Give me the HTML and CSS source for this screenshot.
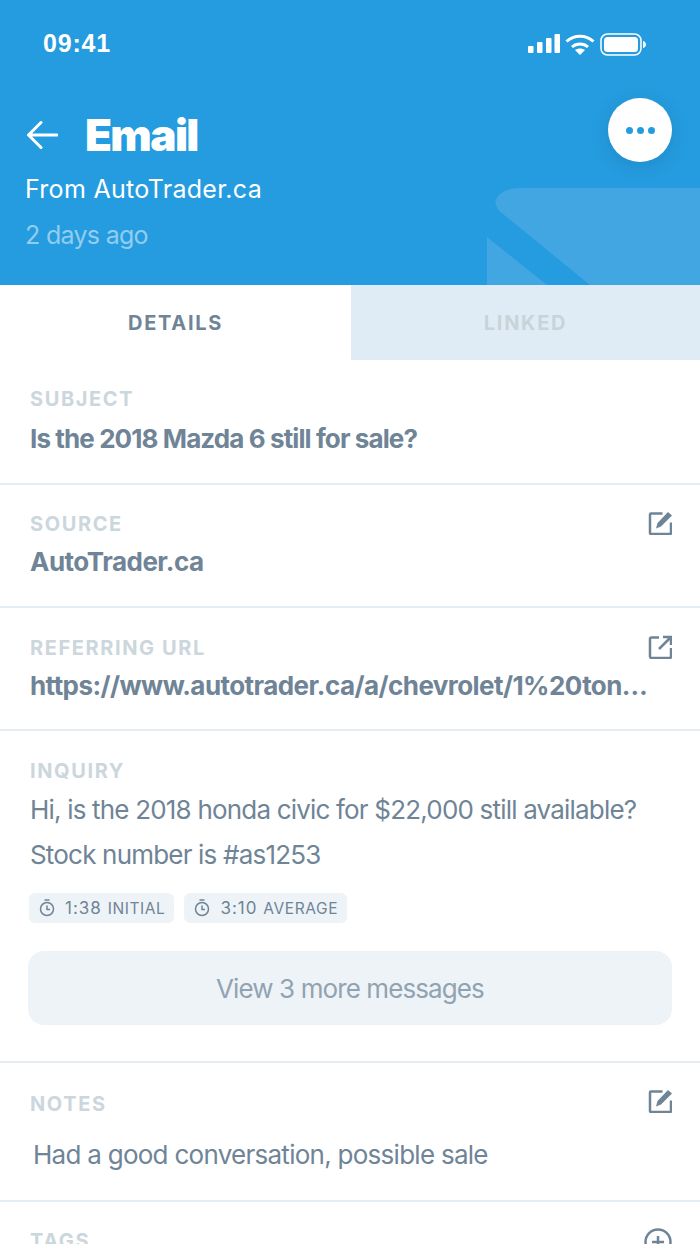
FILE: index.html
```html
<!DOCTYPE html>
<html lang="en">
<head>
<meta charset="utf-8">
<title>Email</title>
<link rel="stylesheet" href="styles.css">
</head>
<body>
<div class="screen">
  <header class="hero">
    <svg class="hero-art" width="700" height="285" viewBox="0 0 700 285" aria-hidden="true">
      <path class="art" d="M700 188H520C504 188 491 198 497 207C498 210 500 212 503 214L590 285H700Z"/>
      <path class="art" d="M487 237L547 285H487Z"/>
    </svg>
    <div class="status">
      <span class="clock">09:41</span>
      <div class="status-icons">
        <svg width="33" height="20" viewBox="0 0 33 20"><g fill="#fff"><rect x="1" y="12" width="5.500" height="7" rx="1"/><rect x="10" y="8" width="5.500" height="11" rx="1"/><rect x="19" y="4" width="5.500" height="15" rx="1"/><rect x="27.500" y="0" width="5.500" height="19" rx="1"/></g></svg>
        <svg width="30" height="22" viewBox="0 0 30 22"><g fill="none" stroke="#fff" stroke-width="3"><path d="M1.500 8.500C9 1.500 21 1.500 28.500 8.500"/><path d="M7 14C11.500 10 18.500 10 23 14"/></g><path fill="#fff" d="M15 22L10 17C13 15 17 15 20 17Z"/></svg>
        <svg width="46" height="23" viewBox="0 0 46 23"><rect x="1" y="1" width="40" height="21" rx="6.500" fill="none" stroke="#fff" stroke-width="1.500"/><rect x="4" y="4" width="34" height="15" rx="3.500" fill="#fff"/><path fill="#fff" d="M43 8C45 8.500 46 10 46 11.500C46 13 45 14.500 43 15Z"/></svg>
      </div>
    </div>
    <div class="title-row">
      <svg class="back" width="32" height="32" viewBox="0 0 32 32"><path d="M31 16H3.500M15 3.500L2.500 16L15 28.500" fill="none" stroke="#fff" stroke-width="3" stroke-linecap="round" stroke-linejoin="round"/></svg>
      <h1>Email</h1>
    </div>
    <p class="from">From AutoTrader.ca</p>
    <p class="ago">2 days ago</p>
    <button class="more" aria-label="More"><i></i><i></i><i></i></button>
  </header>

  <nav class="tabs">
    <div class="tab active">DETAILS</div>
    <div class="tab">LINKED</div>
  </nav>

  <section class="row subject">
    <div class="label">SUBJECT</div>
    <div class="value tight">Is the 2018 Mazda 6 still for sale?</div>
  </section>

  <section class="row source">
    <div class="label-line"><div class="label">SOURCE</div>
      <svg class="ico" width="24" height="24" viewBox="0 0 24 24"><path class="ln" d="M14.500 2.500H3A1 1 0 0 0 2 3.500V22A1 1 0 0 0 3 23H22A1 1 0 0 0 23 22V11.500"/><path class="fl" d="M20 1L24 4.500L13 15.500L8 17.500L9.500 12Z"/></svg>
    </div>
    <div class="value">AutoTrader.ca</div>
  </section>

  <section class="row url">
    <div class="label-line"><div class="label">REFERRING URL</div>
      <svg class="ico" width="24" height="24" viewBox="0 0 24 24"><path class="ln" d="M11 2.500H3.500A1.500 1.500 0 0 0 2 4V21.500A1.500 1.500 0 0 0 3.500 23H21.500A1.500 1.500 0 0 0 23 21.500V13"/><path class="ln" d="M11 14L22 3M15 2H23V10"/></svg>
    </div>
    <div class="value link">https://www.autotrader.ca/a/chevrolet/1%20ton…</div>
  </section>

  <section class="row inquiry">
    <div class="label">INQUIRY</div>
    <p class="body-text">Hi, is the 2018 honda civic for $22,000 still available?<br>Stock number is #as1253</p>
    <div class="chips">
      <span class="chip">
        <svg width="16" height="18" viewBox="0 0 16 18"><g fill="none" stroke="#6f8496" stroke-width="1.500"><circle cx="8" cy="10" r="6.500"/><path d="M8 6.500V10.500H11"/><path d="M5.500 1H10.500"/></g></svg>
        <span>1:38 <small>INITIAL</small></span>
      </span>
      <span class="chip">
        <svg width="16" height="18" viewBox="0 0 16 18"><g fill="none" stroke="#6f8496" stroke-width="1.500"><circle cx="8" cy="10" r="6.500"/><path d="M8 6.500V10.500H11"/><path d="M5.500 1H10.500"/></g></svg>
        <span>3:10 <small>AVERAGE</small></span>
      </span>
    </div>
    <button class="view-more">View 3 more messages</button>
  </section>

  <section class="row notes">
    <div class="label-line"><div class="label">NOTES</div>
      <svg class="ico raised" width="24" height="24" viewBox="0 0 24 24"><path class="ln" d="M14.500 2.500H3A1 1 0 0 0 2 3.500V22A1 1 0 0 0 3 23H22A1 1 0 0 0 23 22V11.500"/><path class="fl" d="M20 1L24 4.500L13 15.500L8 17.500L9.500 12Z"/></svg>
    </div>
    <p class="note-text">Had a good conversation, possible sale</p>
  </section>

  <section class="row tags">
    <div class="label-line"><div class="label">TAGS</div>
      <svg class="ico" width="28" height="28" viewBox="0 0 28 28"><circle class="ln" cx="14" cy="14" r="12.500"/><path class="ln" d="M14 8V20M8 14H20"/></svg>
    </div>
  </section>
</div>
</body>
</html>
```
FILE: styles.css
```css
* { box-sizing: border-box; }
html, body { margin: 0; padding: 0; background: #fff; }
.screen {
  width: 700px; height: 1244px; overflow: hidden;
  font-family: Inter, "Liberation Sans", sans-serif; color: #6f8496;
}
.hero {
  position: relative; height: 285px; background: #259cdf; color: #fff;
  padding: 0 26px; overflow: hidden;
}
.hero-art { position: absolute; left: 0; top: 0; }
.art { fill: #42a6e3; }
.status {
  position: relative; height: 106px; padding: 30px 28px 0 17px;
  display: flex; justify-content: space-between; align-items: flex-start;
}
.clock { font: bold 25px/26px "Liberation Sans", sans-serif; letter-spacing: 0.8px; }
.status-icons { display: flex; align-items: center; gap: 5px; height: 28px; }
.title-row { position: relative; display: flex; align-items: center; gap: 27px; height: 58px; }
.back { flex: none; width: 32px; height: 32px; }
h1 { margin: 0; font: 900 44px/58px Inter, sans-serif; letter-spacing: -1.600px; }
.from { position: relative; margin: 9px 0 0 -1px; font-size: 25px; line-height: 32px; letter-spacing: 0.3px; }
.ago { position: relative; margin: 14px 0 0 -1px; font-size: 25px; line-height: 32px; letter-spacing: -0.7px; color: #92cdef; }
.more {
  position: absolute; right: 28px; top: 98px; width: 64px; height: 64px;
  border: 0; border-radius: 50%; background: #fff; padding: 0;
  display: flex; align-items: center; justify-content: center; gap: 4px;
  box-shadow: 0 4px 16px rgba(20, 90, 140, 0.25);
}
.more i { width: 7px; height: 7px; border-radius: 50%; background: #259cdf; }
.tabs { display: flex; height: 75px; }
.tab {
  flex: 1; display: flex; align-items: center; justify-content: center;
  font-size: 20px; font-weight: 700; letter-spacing: 1.700px; color: #c9d3da; background: #e0ecf5;
}
.tab.active { flex: none; width: 351px; color: #6f8496; background: #fff; }
.row { border-bottom: 2px solid #e4edf4; padding: 0 28px 0 30px; }
.label { font-size: 20px; line-height: 26px; font-weight: 700; letter-spacing: 1.600px; color: #ccd6dd; }
.label-line { display: flex; justify-content: space-between; align-items: flex-start; }
.value { margin-top: 7px; font-size: 26px; line-height: 36px; font-weight: 700; letter-spacing: -0.5px; color: #6f8496; white-space: nowrap; }
.value.tight { margin-top: 9px; letter-spacing: -0.9px; }
.value.link { letter-spacing: -0.570px; }
.ico { flex: none; }
.ico.raised { margin-top: -2px; }
.ln { fill: none; stroke: #6f8496; stroke-width: 2.500; }
.fl { fill: #6f8496; }
.subject { height: 125px; padding-top: 26px; }
.source { height: 123px; padding-top: 26px; }
.url { height: 123px; padding-top: 27px; }
.inquiry { height: 332px; padding-top: 27px; }
.body-text { margin: 3px 0 0; font-size: 26px; line-height: 45px; letter-spacing: -0.810px; color: #6f8496; white-space: nowrap; }
.chips { display: flex; gap: 10px; margin-top: 16px; margin-left: -1px; }
.chip {
  display: flex; align-items: center; gap: 10px; height: 30px; padding: 0 9px 0 10px;
  background: #eef3f8; border-radius: 6px; font-size: 17px; color: #6f8496; letter-spacing: 1px;
}
.chip small { font-size: 15.500px; letter-spacing: 0.600px; }
.view-more {
  display: block; width: 644px; height: 74px; margin: 28px 0 0 -2px; border: 0; border-radius: 16px;
  background: #eef3f8; color: #91a3b1; font: 26px Inter, sans-serif; letter-spacing: -0.900px;
}
.notes { height: 139px; padding-top: 28px; }
.note-text { margin: 20px 0 0 3px; font-size: 26px; line-height: 36px; letter-spacing: -0.730px; color: #6f8496; }
.tags { border: 0; padding-top: 26px; }
```
